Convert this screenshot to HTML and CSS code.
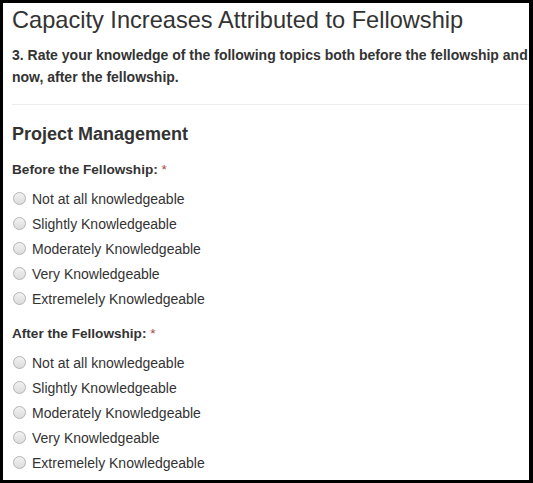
FILE: index.html
```html
<!DOCTYPE html>
<html>
<head>
<meta charset="utf-8">
<link rel="stylesheet" href="styles.css">
</head>
<body>
<div class="frame">
  <h1 class="title">Capacity Increases Attributed to Fellowship</h1>
  <p class="question">3. Rate your knowledge of the following topics both before the fellowship and<br>now, after the fellowship.</p>
  <hr class="sep">
  <h2 class="topic">Project Management</h2>
  <div class="group">
    <div class="label">Before the Fellowship: <span class="req">*</span></div>
    <ul class="options">
      <li class="opt"><span class="radio"></span>Not at all knowledgeable</li>
      <li class="opt"><span class="radio"></span>Slightly Knowledgeable</li>
      <li class="opt"><span class="radio"></span>Moderately Knowledgeable</li>
      <li class="opt"><span class="radio"></span>Very Knowledgeable</li>
      <li class="opt"><span class="radio"></span>Extremelely Knowledgeable</li>
    </ul>
  </div>
  <div class="group group-next">
    <div class="label">After the Fellowship: <span class="req">*</span></div>
    <ul class="options">
      <li class="opt"><span class="radio"></span>Not at all knowledgeable</li>
      <li class="opt"><span class="radio"></span>Slightly Knowledgeable</li>
      <li class="opt"><span class="radio"></span>Moderately Knowledgeable</li>
      <li class="opt"><span class="radio"></span>Very Knowledgeable</li>
      <li class="opt"><span class="radio"></span>Extremelely Knowledgeable</li>
    </ul>
  </div>
</div>
</body>
</html>
```
FILE: styles.css
```css
html, body {
  margin: 0;
  padding: 0;
  background: #000;
}
body {
  font-family: "Liberation Sans", Arial, sans-serif;
  color: #333;
}
.frame {
  box-sizing: border-box;
  width: 533px;
  height: 483px;
  border-style: solid;
  border-color: #000;
  border-width: 3px 4px 3px 3px;
  background: #fff;
  padding: 0 0 0 9px;
  overflow: hidden;
}
.title {
  margin: 0;
  padding-top: 3px;
  font-size: 23.6px;
  font-weight: normal;
  line-height: 28px;
  white-space: nowrap;
}
.question {
  margin: 10px 0 0 0;
  font-size: 14px;
  font-weight: bold;
  line-height: 22px;
  white-space: nowrap;
}
.sep {
  margin: 16px 0 0 0;
  border: 0;
  border-top: 1px solid #eee;
  height: 0;
}
.topic {
  margin: 18px 0 0 0;
  font-size: 18px;
  font-weight: bold;
  line-height: 22px;
}
.group {
  margin-top: 16px;
}
.group-next {
  margin-top: 14px;
}
.label {
  font-size: 13.6px;
  font-weight: bold;
  line-height: 18px;
}
.req {
  color: #a94442;
  font-weight: normal;
}
.options {
  list-style: none;
  margin: 7px 0 0 0;
  padding: 0;
}
.opt {
  display: flex;
  align-items: center;
  height: 25px;
  font-size: 14px;
}
.radio {
  box-sizing: border-box;
  width: 13px;
  height: 13px;
  border-radius: 50%;
  border: 1px solid #b4b4b4;
  background: linear-gradient(#f2f2f2, #dcdcdc);
  margin: 0 6px 0 1px;
  flex: none;
}
```
